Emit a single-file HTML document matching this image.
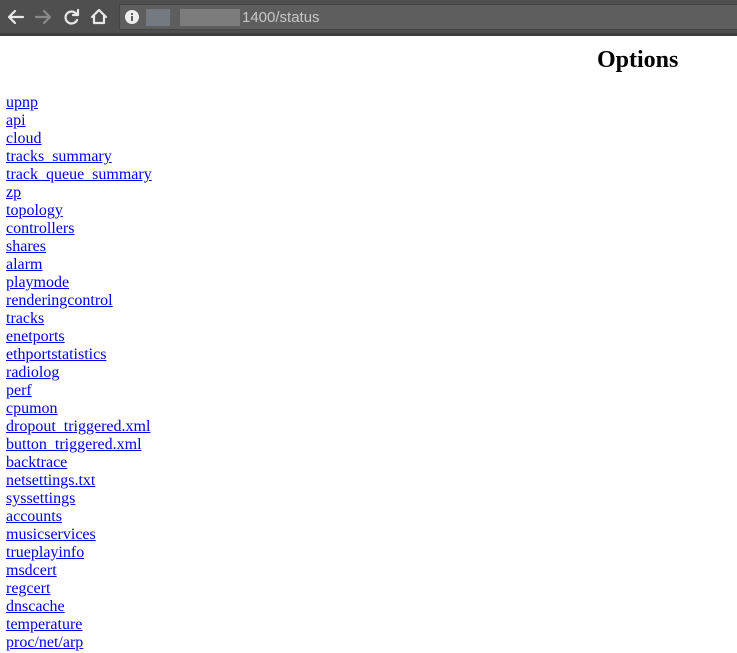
<!DOCTYPE html>
<html><head><style>
body{margin:0;width:737px;height:653px;overflow:hidden;background:#fff;position:relative;font-family:"Liberation Serif",serif}
.bar{position:absolute;left:0;top:0;width:737px;height:33px;background:#4f4f4f;border-bottom:3px solid #3e3e3e}
.addr{position:absolute;left:119px;top:4px;width:630px;height:26px;background:#5e5e5e;border:1px solid #444;box-sizing:border-box}
.url{position:absolute;left:242px;top:9px;font:15px "Liberation Sans",sans-serif;color:#c8c8c8}
.blur{position:absolute;top:9px;height:17px;background:#7a7a7a}
h1{position:absolute;left:597px;top:46px;margin:0;font-size:24px;font-weight:bold;line-height:28px}
.links{position:absolute;left:6px;top:94px;font-size:16px;line-height:18px}
.links a{color:#0000ee;display:block;text-decoration:underline}
</style></head><body>
<div class="bar">
<svg width="120" height="33" style="position:absolute;left:0;top:0">
<g fill="none" stroke-width="2.2" stroke-linecap="round" stroke-linejoin="round">
<path d="M10 17h13M15 11l-6 6 6 6" stroke="#e8e8e8"/>
<path d="M36 17h13M44 11l6 6-6 6" stroke="#8a8a8a"/>
<path d="M77 15a6 6 0 1 0 0 5" stroke="#e8e8e8"/>
<path d="M78 10v5h-5" stroke="#e8e8e8"/>
<path d="M92 17l7-7 7 7M94 16v7h10v-7" stroke="#e8e8e8"/>
</g></svg>
<div class="addr"></div>
<svg width="16" height="16" style="position:absolute;left:124px;top:9px"><circle cx="8" cy="8" r="7" fill="#eee"/><rect x="7" y="7" width="2" height="5" fill="#5e5e5e"/><rect x="7" y="4" width="2" height="2" fill="#5e5e5e"/></svg>
<div class="blur" style="left:146px;width:24px;background:#747a80"></div>
<div class="blur" style="left:180px;width:60px;background:#7c7c7c"></div>
<div class="url">1400/status</div>
</div>
<h1>Options</h1>
<div class="links">
<a>upnp</a><a>api</a><a>cloud</a><a>tracks_summary</a><a>track_queue_summary</a><a>zp</a><a>topology</a><a>controllers</a><a>shares</a><a>alarm</a><a>playmode</a><a>renderingcontrol</a><a>tracks</a><a>enetports</a><a>ethportstatistics</a><a>radiolog</a><a>perf</a><a>cpumon</a><a>dropout_triggered.xml</a><a>button_triggered.xml</a><a>backtrace</a><a>netsettings.txt</a><a>syssettings</a><a>accounts</a><a>musicservices</a><a>trueplayinfo</a><a>msdcert</a><a>regcert</a><a>dnscache</a><a>temperature</a><a>proc/net/arp</a>
</div>
</body></html>
